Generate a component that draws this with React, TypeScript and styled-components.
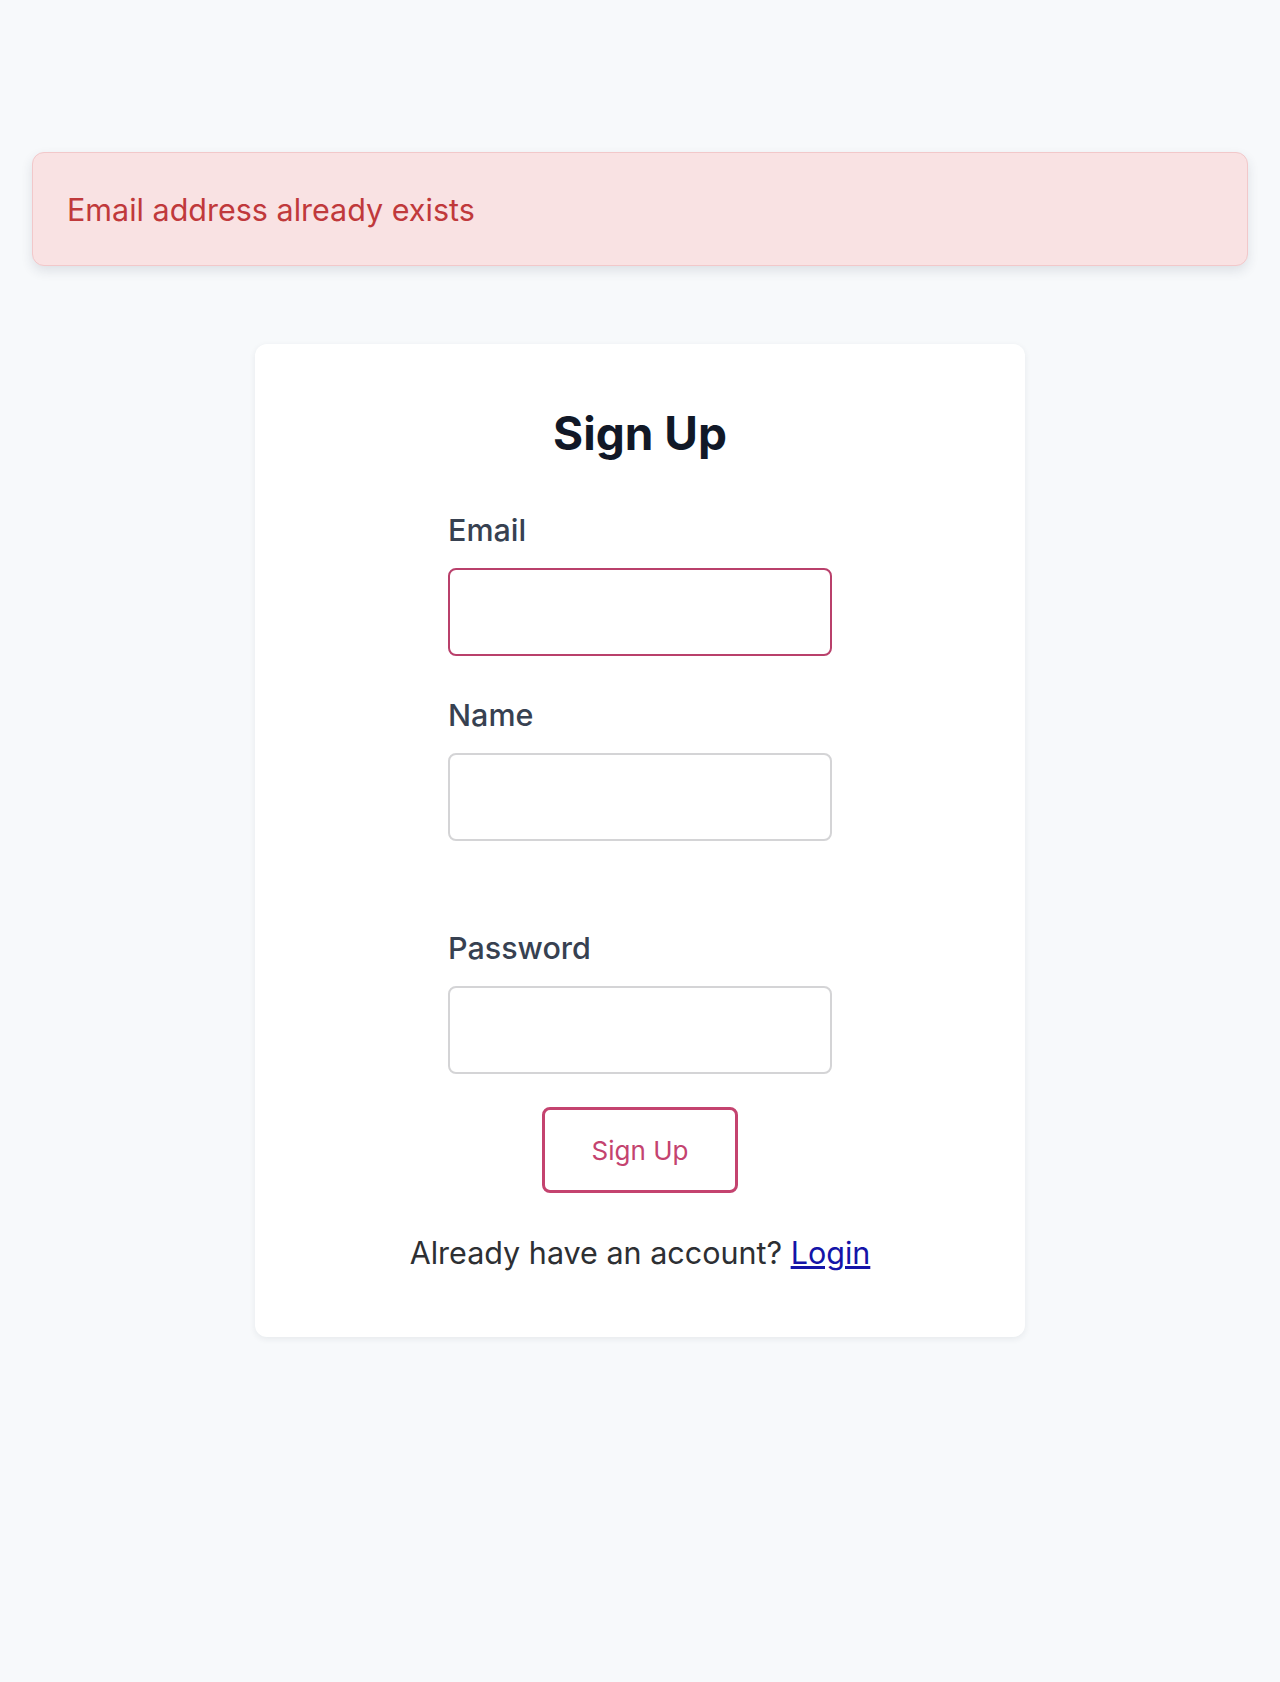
import React, { useState } from "react";
import styled, { createGlobalStyle, css } from "styled-components";

const GlobalStyle = createGlobalStyle`
  html, body {
    margin: 0;
    padding: 0;
    background: #f7f9fb;
  }
  body {
    font-family: Inter, "Noto Sans", "Liberation Sans", sans-serif;
    -webkit-font-smoothing: antialiased;
  }
`;

type FieldProps = {
  label: string;
  type?: string;
  value: string;
  invalid?: boolean;
  spaced?: boolean;
  onChange: (v: string) => void;
};

const Field = ({ label, type, value, invalid, spaced, onChange }: FieldProps) => (
  <FieldWrap $spaced={spaced}>
    <Label>{label}</Label>
    <Input
      type={type || "text"}
      value={value}
      $invalid={invalid}
      onChange={(e) => onChange(e.target.value)}
    />
  </FieldWrap>
);

const App = () => {
  const [email, setEmail] = useState("");
  const [name, setName] = useState("");
  const [password, setPassword] = useState("");
  const error = "Email address already exists";

  return (
    <Page>
      <GlobalStyle />
      {error && <Alert>{error}</Alert>}
      <Card>
        <Title>Sign Up</Title>
        <Form onSubmit={(e) => e.preventDefault()}>
          <Field label="Email" type="email" value={email} invalid onChange={setEmail} />
          <Field label="Name" value={name} spaced onChange={setName} />
          <Field label="Password" type="password" value={password} onChange={setPassword} />
          <SubmitButton type="submit">Sign Up</SubmitButton>
        </Form>
        <Footer>
          Already have an account? <LoginLink href="#">Login</LoginLink>
        </Footer>
      </Card>
    </Page>
  );
};

const Page = styled.div`
  min-height: 1682px;
  padding: 152px 32px 0;
  box-sizing: border-box;
`;

const Alert = styled.div`
  display: flex;
  align-items: center;
  height: 114px;
  box-sizing: border-box;
  padding: 0 34px;
  background: #f9e2e3;
  border: 1px solid #f2c8ca;
  border-radius: 12px;
  box-shadow: 0 5px 12px rgba(40, 50, 70, 0.12);
  color: #c0393b;
  font-size: 30.5px;
`;

const Card = styled.div`
  width: 770px;
  box-sizing: border-box;
  margin: 78px auto 0;
  padding: 61px 0 67px;
  background: #ffffff;
  border-radius: 12px;
  box-shadow: 0 2px 6px rgba(40, 50, 70, 0.08);
  display: flex;
  flex-direction: column;
  align-items: center;
`;

const Title = styled.h1`
  margin: 0 0 51px;
  font-size: 46px;
  line-height: 56px;
  font-weight: 700;
  color: #111827;
`;

const Form = styled.form`
  width: 384px;
  display: flex;
  flex-direction: column;
`;

const FieldWrap = styled.div<{ $spaced?: boolean }>`
  display: flex;
  flex-direction: column;
  gap: 21px;
  margin-bottom: ${({ $spaced }) => ($spaced ? "89px" : "41px")};
  &:last-of-type {
    margin-bottom: 33px;
  }
`;

const Label = styled.label`
  font-size: 30.5px;
  line-height: 35px;
  font-weight: 500;
  color: #374151;
`;

const Input = styled.input<{ $invalid?: boolean }>`
  height: 88px;
  box-sizing: border-box;
  padding: 0 16px;
  border: 2px solid #d4d4d6;
  border-radius: 8px;
  background: #ffffff;
  font-size: 26px;
  font-family: inherit;
  outline: none;
  ${({ $invalid }) =>
    $invalid &&
    css`
      border-color: #b9406b;
    `}
`;

const SubmitButton = styled.button`
  align-self: center;
  width: 196px;
  height: 86px;
  border: 3px solid #c4436f;
  border-radius: 8px;
  background: #ffffff;
  color: #c4436f;
  font-family: inherit;
  font-size: 26px;
  cursor: pointer;
`;

const Footer = styled.p`
  margin: 42px 0 0;
  font-size: 30.5px;
  line-height: 35px;
  color: #2d2f33;
`;

const LoginLink = styled.a`
  color: #1414a8;
  text-decoration: underline;
`;

export default App;
